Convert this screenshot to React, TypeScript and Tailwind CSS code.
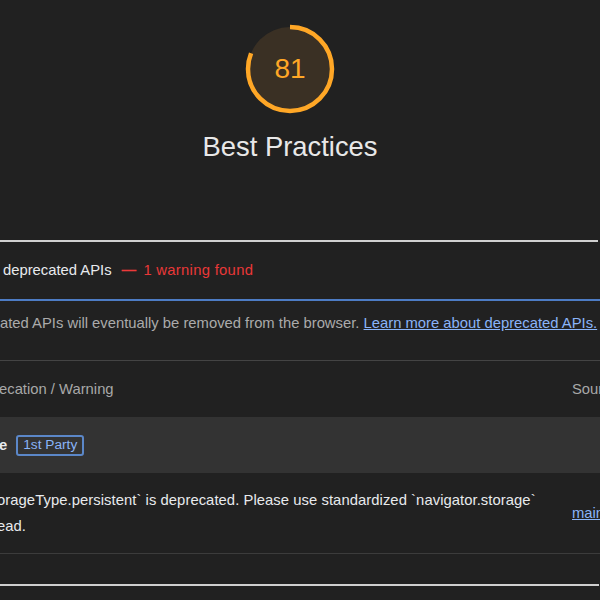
import React from 'react';

const SCORE = 81;
const R = 42;
const CIRC = 2 * Math.PI * R;

const Gauge: React.FC = () => (
  <div className="relative w-[90px] h-[90px]">
    <svg width="90" height="90" viewBox="0 0 90 90" className="-rotate-90">
      <circle cx="45" cy="45" r={R} fill="#3a3024" stroke="none" />
      <circle
        cx="45"
        cy="45"
        r={R}
        fill="none"
        stroke="#ffa726"
        strokeWidth="4.5"
        strokeDasharray={`${(CIRC * SCORE) / 100} ${CIRC}`}
      />
    </svg>
    <div className="absolute inset-0 flex items-center justify-center text-[28px] text-[#ffa726]">
      {SCORE}
    </div>
  </div>
);

export default function App() {
  return (
    <div className="w-[600px] h-[600px] bg-[#212121] overflow-hidden font-['Liberation_Sans',Arial,sans-serif] text-[14.8px]">
      {/* Category header */}
      <div className="w-[580px] flex flex-col items-center pt-[24px]">
        <Gauge />
        <div className="mt-[15px] text-[27.4px] leading-[36px] text-[#e8e8e8]">Best Practices</div>
      </div>

      {/* Audit */}
      <div className="mt-[75px] w-[598px] border-t-2 border-[#d0d0d0]" />
      <div className="h-[57px] flex items-center pl-[3px] whitespace-nowrap">
        <span className="text-[#e8eaed]">deprecated APIs</span>
        <span className="ml-[10px] font-bold text-[#ec3a3a]">—</span>
        <span className="ml-[7px] text-[#e93838] tracking-[0.3px]">1 warning found</span>
      </div>
      <div className="border-t-2 border-[#4d7cc4]" />
      <div className="h-[59px] pt-[12px] whitespace-nowrap leading-[20px] text-[#ababab]">
        ated APIs will eventually be removed from the browser.{' '}
        <a className="text-[#8ab4f8] underline">Learn more about deprecated APIs.</a>
      </div>

      {/* Table */}
      <div className="border-t border-[#444444]" />
      <div className="h-[56px] grid grid-cols-[572px_1fr] items-center whitespace-nowrap text-[#a8a8a8]">
        <span className="-ml-[1px]">ecation / Warning</span>
        <span>Source</span>
      </div>
      <div className="h-[56px] bg-[#333333] flex items-center whitespace-nowrap">
        <span className="-ml-[1px] font-bold text-[#e8eaed]">e</span>
        <span className="ml-[9px] h-[21px] px-[5px] flex items-center rounded-[3px] border-2 border-[#5b87c8] text-[13.7px] text-[#8ab4f8]">
          1st Party
        </span>
      </div>
      <div className="h-[81px] grid grid-cols-[572px_1fr] items-center whitespace-nowrap leading-[26px] text-[#e8eaed] border-b border-[#3c3c3c]">
        <div className="-ml-[3px] tracking-[0.06px]">
          <div>orageType.persistent` is deprecated. Please use standardized `navigator.storage`</div>
          <div>ead.</div>
        </div>
        <a className="text-[#8ab4f8] underline">main.js:1:2043</a>
      </div>
      <div className="h-[30px]" />
      <div className="w-[599px] border-t-2 border-[#cfcfcf]" />
    </div>
  );
}
